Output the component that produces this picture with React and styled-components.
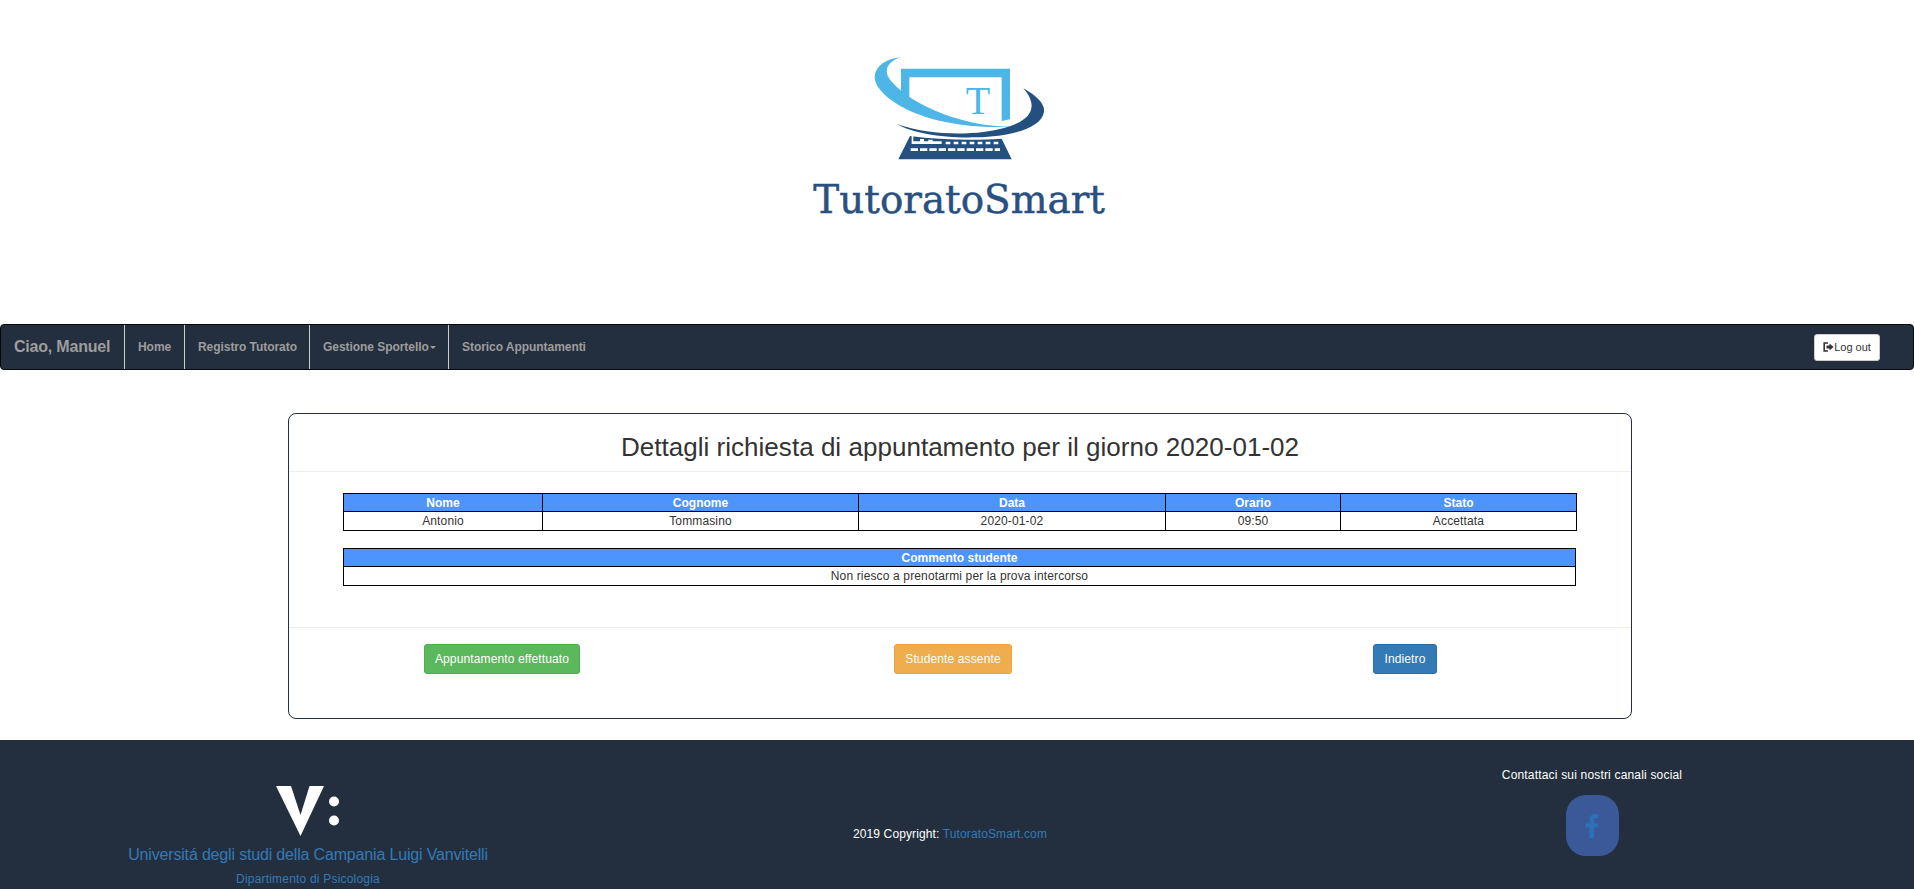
import React from 'react';
import styled, { createGlobalStyle } from 'styled-components';
import { FaFacebookF } from 'react-icons/fa';

const GlobalStyle = createGlobalStyle`
  html, body {
    margin: 0;
    padding: 0;
    background: #fff;
    font-family: "Liberation Sans", Arial, sans-serif;
    font-size: 12px;
    color: #333;
  }
`;

const Page = styled.div`
  height: 889px;
  overflow: hidden;
`;

const LogoHeader = styled.header`
  height: 284px;
  padding: 40px 0 0 6px;
  display: flex;
  justify-content: center;
  align-items: flex-start;
`;

const Navbar = styled.nav`
  height: 44px;
  display: flex;
  align-items: stretch;
  background: #232f3e;
  border: 1px solid #080808;
  border-radius: 4px;
`;

const Brand = styled.a`
  width: 123px;
  box-sizing: border-box;
  padding-left: 13px;
  display: flex;
  align-items: center;
  font-size: 16px;
  font-weight: bold;
  letter-spacing: -0.2px;
  color: #9d9d9d;
`;

const NavItem = styled.a`
  width: ${(p) => p.$width}px;
  box-sizing: border-box;
  padding-left: 13px;
  display: flex;
  align-items: center;
  border-left: 1px solid #ccc;
  font-size: 12px;
  font-weight: bold;
  letter-spacing: -0.05px;
  color: #9d9d9d;
`;

const Caret = styled.span`
  margin-left: 1px;
  border-top: 3px solid #9d9d9d;
  border-left: 3px solid transparent;
  border-right: 3px solid transparent;
`;

const LogoutSlot = styled.div`
  margin-left: auto;
  padding-right: 33px;
  display: flex;
  align-items: center;
`;

const LogoutButton = styled.button`
  width: 66px;
  height: 27px;
  padding: 0 0 1px;
  display: flex;
  align-items: center;
  justify-content: center;
  background: #fff;
  border: 1px solid #ccc;
  border-radius: 3px;
  font-family: inherit;
  font-size: 11px;
  color: #333;
`;

const Main = styled.main`
  padding: 43px 0 21px 288px;
`;

const Card = styled.section`
  width: 1344px;
  height: 306px;
  box-sizing: border-box;
  background: #fff;
  border: 1px solid #232f3e;
  border-radius: 8px;
`;

const CardTitle = styled.h1`
  margin: 0;
  height: 58px;
  box-sizing: border-box;
  padding-top: 9px;
  border-bottom: 1px solid #eee;
  display: flex;
  align-items: center;
  justify-content: center;
  font-size: 26px;
  font-weight: normal;
  letter-spacing: 0.03px;
  color: #333;
`;

const CardBody = styled.div`
  height: 156px;
  box-sizing: border-box;
  padding: 21px 54px 0;
  border-bottom: 1px solid #eee;
  display: flex;
  flex-direction: column;
  gap: 17px;
`;

const Table = styled.table`
  width: 1233px;
  table-layout: fixed;
  border-collapse: collapse;
  font-size: 12px;
`;

const Th = styled.th`
  padding: 0;
  height: 17px;
  line-height: 16px;
  background: #4d94ff;
  border: 1px solid #000;
  color: #fff;
  font-weight: bold;
  text-align: center;
`;

const Td = styled.td`
  padding: 0;
  height: 18px;
  line-height: 16px;
  border: 1px solid #000;
  color: #333;
  letter-spacing: 0.14px;
  text-align: center;
`;

const Col = styled.col`
  width: ${(p) => p.$width}px;
`;

const Actions = styled.div`
  padding-top: 16px;
  display: grid;
  grid-template-columns: 426px 476px 428px;
  justify-items: center;
`;

const ActionButton = styled.button`
  height: 30px;
  padding: 0 10px;
  background: ${(p) => p.$bg};
  border: 1px solid ${(p) => p.$border};
  border-radius: 3px;
  font-family: inherit;
  font-size: 12px;
  letter-spacing: 0.13px;
  color: #fff;
`;

const Footer = styled.footer`
  height: 149px;
  display: grid;
  grid-template-columns: 616px 668px 616px;
  background: #232f3e;
  color: #fff;
  font-size: 12px;
`;

const FooterColumn = styled.div`
  display: flex;
  flex-direction: column;
  align-items: center;
`;

const Vanvitelli = styled(FooterColumn)`
  padding-top: 46px;
`;

const UniName = styled.a`
  margin-top: 9px;
  font-size: 16px;
  line-height: 20px;
  letter-spacing: -0.17px;
  color: #337ab7;
`;

const Department = styled.a`
  margin-top: 6px;
  line-height: 17px;
  letter-spacing: 0.2px;
  color: #337ab7;
`;

const CopyrightColumn = styled(FooterColumn)`
  padding-top: 86px;
  line-height: 17px;
  letter-spacing: 0.12px;
`;

const Link = styled.a`
  color: #337ab7;
`;

const SocialColumn = styled(FooterColumn)`
  padding-top: 27px;
  line-height: 17px;
  letter-spacing: 0.18px;
`;

const FacebookButton = styled.a`
  width: 53px;
  height: 61px;
  margin-top: 11px;
  display: flex;
  align-items: center;
  justify-content: center;
  background: #3b5998;
  border-radius: 20px;
  color: #2b71b4;
  font-size: 24px;
`;

const TutoratoLogo = () => (
  <svg width="360" height="200" viewBox="0 0 1080 600">
    <path fill="#4db6e6" d="M363 86H690V238L665 243V112H388V197L363 178Z" />
    <text x="594" y="222" textAnchor="middle" fontFamily="'Liberation Serif', serif" fontSize="120" fill="#4db6e6">T</text>
    <path fill="#24507f" d="M390 288C480 300 580 302 665 296L695 358H355Z" />
    <path fill="#fff" d="M395 288H400V304H420V297H432V304H445V299H458V304H485V312H395Z" />
    <path fill="none" stroke="#fff" strokeWidth="8" strokeDasharray="14 10" d="M497 309H655" />
    <path fill="none" stroke="#fff" strokeWidth="8" strokeDasharray="22 6" d="M392 329H660" />
    <path fill="#4db6e6" d="M362 52C310 58 280 85 285 120C296 172 425 272 700 260C560 262 400 200 335 125C305 90 325 65 362 52Z" />
    <path fill="#24507f" d="M730 145C775 170 795 195 792 215C785 265 690 290 590 292C490 295 400 280 350 252C430 280 530 286 610 276C710 264 800 225 730 145Z" />
    <text x="100" y="518" fontFamily="'DejaVu Serif', serif" fontSize="120" textLength="875" lengthAdjust="spacingAndGlyphs" fill="#2a5080" stroke="#2a5080" strokeWidth="1.5">TutoratoSmart</text>
  </svg>
);

const LogoutIcon = () => (
  <svg width="11" height="10" viewBox="0 0 11 10">
    <path fill="none" stroke="#333" strokeWidth="1.6" d="M5 1H1.2V9H5" />
    <path fill="#333" d="M3.5 3.6H6.5V1.6L10.5 5 6.5 8.4V6.4H3.5Z" />
  </svg>
);

const VanvitelliLogo = () => (
  <svg width="64" height="50" viewBox="0 0 64 50">
    <path fill="#fff" d="M0 0H15L24.5 29 33.5 0H48L24.5 50Z" />
    <circle cx="58" cy="15.5" r="5" fill="#fff" />
    <circle cx="58" cy="34.5" r="5" fill="#fff" />
  </svg>
);

const columns = [199, 316, 307, 175, 236];
const details = [
  ['Nome', 'Antonio'],
  ['Cognome', 'Tommasino'],
  ['Data', '2020-01-02'],
  ['Orario', '09:50'],
  ['Stato', 'Accettata'],
];

export default function App() {
  return (
    <Page>
      <GlobalStyle />
      <LogoHeader>
        <TutoratoLogo />
      </LogoHeader>
      <Navbar>
        <Brand>Ciao, Manuel</Brand>
        <NavItem $width={60}>Home</NavItem>
        <NavItem $width={125}>Registro Tutorato</NavItem>
        <NavItem $width={139}>
          Gestione Sportello
          <Caret />
        </NavItem>
        <NavItem $width={150}>Storico Appuntamenti</NavItem>
        <LogoutSlot>
          <LogoutButton>
            <LogoutIcon />
            Log out
          </LogoutButton>
        </LogoutSlot>
      </Navbar>
      <Main>
        <Card>
          <CardTitle>Dettagli richiesta di appuntamento per il giorno 2020-01-02</CardTitle>
          <CardBody>
            <Table>
              <colgroup>
                {columns.map((w, i) => (
                  <Col key={i} $width={w} />
                ))}
              </colgroup>
              <thead>
                <tr>
                  {details.map(([head]) => (
                    <Th key={head}>{head}</Th>
                  ))}
                </tr>
              </thead>
              <tbody>
                <tr>
                  {details.map(([head, value]) => (
                    <Td key={head}>{value}</Td>
                  ))}
                </tr>
              </tbody>
            </Table>
            <Table>
              <thead>
                <tr>
                  <Th>Commento studente</Th>
                </tr>
              </thead>
              <tbody>
                <tr>
                  <Td>Non riesco a prenotarmi per la prova intercorso</Td>
                </tr>
              </tbody>
            </Table>
          </CardBody>
          <Actions>
            <ActionButton $bg="#5cb85c" $border="#4cae4c">Appuntamento effettuato</ActionButton>
            <ActionButton $bg="#f0ad4e" $border="#eea236">Studente assente</ActionButton>
            <ActionButton $bg="#337ab7" $border="#2e6da4">Indietro</ActionButton>
          </Actions>
        </Card>
      </Main>
      <Footer>
        <Vanvitelli>
          <VanvitelliLogo />
          <UniName>Universitá degli studi della Campania Luigi Vanvitelli</UniName>
          <Department>Dipartimento di Psicologia</Department>
        </Vanvitelli>
        <CopyrightColumn>
          <span>
            2019 Copyright: <Link>TutoratoSmart.com</Link>
          </span>
        </CopyrightColumn>
        <SocialColumn>
          <span>Contattaci sui nostri canali social</span>
          <FacebookButton>
            <FaFacebookF />
          </FacebookButton>
        </SocialColumn>
      </Footer>
    </Page>
  );
}
